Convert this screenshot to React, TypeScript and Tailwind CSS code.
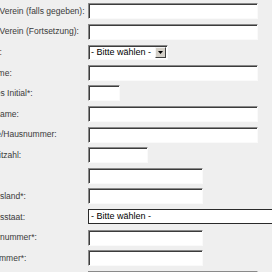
const rows: { label: string; kind: "input" | "select" | "wide-select"; w?: string }[] = [
  { label: "Firma/Verein (falls gegeben):", kind: "input", w: "w-[170px]" },
  { label: "Firma/Verein (Fortsetzung):", kind: "input", w: "w-[170px]" },
  { label: "Status:", kind: "select" },
  { label: "Vorname:", kind: "input", w: "w-[170px]" },
  { label: "Zweites Initial*:", kind: "input", w: "w-[32px]" },
  { label: "Nachname:", kind: "input", w: "w-[170px]" },
  { label: "Straße/Hausnummer:", kind: "input", w: "w-[170px]" },
  { label: "Postleitzahl:", kind: "input", w: "w-[60px]" },
  { label: "Ort*:", kind: "input", w: "w-[115px]" },
  { label: "Bundesland*:", kind: "input", w: "w-[115px]" },
  { label: "Bundesstaat:", kind: "wide-select" },
  { label: "Handynummer*:", kind: "input", w: "w-[115px]" },
  { label: "Faxnummer*:", kind: "input", w: "w-[115px]" },
  { label: "E-Mail-Adresse*:", kind: "input", w: "w-[170px]" },
];

function TextBox({ w }: { w?: string }) {
  return (
    <div
      className={`${w} h-[16px] shrink-0 border border-t-[#8a8a8a] border-l-[#8a8a8a] border-b-[#fafafa] border-r-[#fafafa] bg-white shadow-[inset_1px_1px_0_#3c3c3c]`}
    />
  );
}

function SmallSelect() {
  return (
    <div className="flex h-[15px] w-[80px] shrink-0 items-center border border-t-[#8a8a8a] border-l-[#8a8a8a] border-b-[#fafafa] border-r-[#fafafa] bg-white pl-[2px] shadow-[inset_1px_1px_0_#3c3c3c]">
      <span className="flex-1 text-[9px] leading-none text-black">- Bitte wählen -</span>
      <span className="mr-[1px] flex h-[11px] w-[11px] items-center justify-center border border-t-[#f4f4f4] border-l-[#f4f4f4] border-b-[#404040] border-r-[#404040] bg-[#d4d0c8]">
        <svg width="5" height="3" viewBox="0 0 5 3">
          <path d="M0 0h5L2.5 3z" fill="#000" />
        </svg>
      </span>
    </div>
  );
}

function WideSelect() {
  return (
    <div className="flex h-[15px] w-[200px] shrink-0 items-center border border-[#2a2a2a] bg-white pl-[2px]">
      <span className="text-[9px] leading-none text-black">- Bitte wählen -</span>
    </div>
  );
}

export default function App() {
  return (
    <div className="h-[272px] w-[272px] overflow-hidden bg-[#efefef] font-[family-name:Liberation_Sans,Arial,sans-serif]">
      <div className="-ml-[24.6px] flex flex-col gap-[4.6px] pt-[3px]">
        {rows.map((r) => (
          <div key={r.label} className="flex h-[16px] items-center">
            <span className="w-[112.6px] shrink-0 whitespace-nowrap text-[8.5px] leading-none text-[#3a3a3a]">
              {r.label}
            </span>
            {r.kind === "input" && <TextBox w={r.w} />}
            {r.kind === "select" && <SmallSelect />}
            {r.kind === "wide-select" && <WideSelect />}
          </div>
        ))}
      </div>
    </div>
  );
}
